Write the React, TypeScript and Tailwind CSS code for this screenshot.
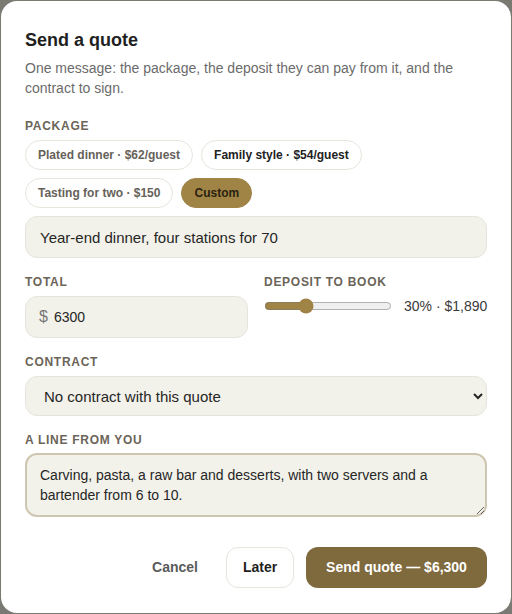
import { useState } from 'react'

const packages = [
  { id: 'plated', label: 'Plated dinner · $62/guest' },
  { id: 'family', label: 'Family style · $54/guest' },
  { id: 'tasting', label: 'Tasting for two · $150' },
  { id: 'custom', label: 'Custom' },
]

function Label({ children }: { children: React.ReactNode }) {
  return (
    <div className="text-[12px] leading-4 font-bold uppercase tracking-[0.06em] text-[#6b6458]">
      {children}
    </div>
  )
}

export default function App() {
  const [selected, setSelected] = useState('custom')
  const [custom, setCustom] = useState('Year-end dinner, four stations for 70')
  const [total, setTotal] = useState('6300')
  const [deposit, setDeposit] = useState(30)
  const [contract, setContract] = useState('none')
  const [note, setNote] = useState(
    'Carving, pasta, a raw bar and desserts, with two servers and a bartender from 6 to 10.'
  )

  const totalNum = Number(total) || 0
  const depositAmt = Math.round((totalNum * deposit) / 100)

  return (
    <div className="min-h-screen bg-[#7a7a72] p-px font-['Liberation_Sans',Arial,sans-serif]">
      <div className="bg-white rounded-2xl px-6 pt-[25px] pb-6 h-[612px]">
        <h1 className="text-[18px] leading-7 font-bold text-[#1f1f1f]">Send a quote</h1>
        <p className="mt-1 text-[14px] leading-5 text-[#6b6b6b]">
          One message: the package, the deposit they can pay from it, and the contract to sign.
        </p>

        <div className="mt-5">
          <Label>Package</Label>
          <div className="mt-1.5 flex flex-wrap gap-2">
            {packages.map(p => {
              const active = p.id === selected
              return (
                <button
                  key={p.id}
                  type="button"
                  onClick={() => setSelected(p.id)}
                  className={
                    active
                      ? 'h-[30px] px-3 rounded-full border border-[#a08446] bg-[#a08446] text-[12px] font-bold text-[#2a2210]'
                      : p.id === 'family'
                        ? 'h-[30px] px-3 rounded-full border border-[#e6e5de] bg-white text-[12px] font-bold text-[#222]'
                        : 'h-[30px] px-3 rounded-full border border-[#e6e5de] bg-white text-[12px] font-bold text-[#66625a]'
                  }
                >
                  {p.label}
                </button>
              )
            })}
          </div>
          <input
            value={custom}
            onChange={e => setCustom(e.target.value)}
            className="mt-2 w-full h-[42px] px-[14px] rounded-xl border border-[#e6e5dc] bg-[#f2f2ea] text-[15px] text-[#262626] outline-none"
          />
        </div>

        <div className="mt-4 grid grid-cols-2 gap-4">
          <div>
            <Label>Total</Label>
            <div className="mt-1.5 h-[42px] flex items-center gap-1.5 px-[13px] rounded-xl border border-[#e6e5dc] bg-[#f2f2ea]">
              <span className="text-[16px] text-[#777]">$</span>
              <input
                value={total}
                onChange={e => setTotal(e.target.value.replace(/[^0-9]/g, ''))}
                className="flex-1 min-w-0 bg-transparent text-[14px] text-[#262626] outline-none"
              />
            </div>
          </div>
          <div>
            <Label>Deposit to book</Label>
            <div className="mt-1.5 h-5 flex items-center gap-3">
              <input
                type="range"
                min={0}
                max={100}
                value={deposit}
                onChange={e => setDeposit(Number(e.target.value))}
                className="w-[128px] accent-[#a08446]"
              />
              <span className="ml-auto text-[14px] text-[#3a3a3a] whitespace-nowrap">
                {deposit}% · ${depositAmt.toLocaleString('en-US')}
              </span>
            </div>
          </div>
        </div>

        <div className="mt-4">
          <Label>Contract</Label>
          <select
            value={contract}
            onChange={e => setContract(e.target.value)}
            className="mt-1.5 w-full h-10 px-[14px] rounded-xl border border-[#e6e5dc] bg-[#f2f2ea] text-[15px] text-[#262626] outline-none"
          >
            <option value="none">No contract with this quote</option>
            <option value="standard">Standard catering agreement</option>
          </select>
        </div>

        <div className="mt-4">
          <Label>A line from you</Label>
          <textarea
            value={note}
            onChange={e => setNote(e.target.value)}
            rows={2}
            className="mt-[5px] block w-full h-16 px-[13px] py-[10px] rounded-xl border-2 border-[#cfc6b2] bg-[#f2f2ea] text-[14px] leading-5 text-[#262626] outline-none"
          />
        </div>

        <div className="mt-[30px] flex items-center justify-end gap-3">
          <button type="button" className="h-[41px] px-4 text-[14px] font-bold text-[#5a5a5a]">
            Cancel
          </button>
          <button
            type="button"
            className="h-[41px] w-[68px] rounded-xl border border-[#e6e5de] bg-white text-[14px] font-bold text-[#1f1f1f]"
          >
            Later
          </button>
          <button
            type="button"
            className="h-[41px] w-[181px] rounded-xl bg-[#7f6a3e] text-[14px] font-bold text-white"
          >
            Send quote — ${totalNum.toLocaleString('en-US')}
          </button>
        </div>
      </div>
    </div>
  )
}
